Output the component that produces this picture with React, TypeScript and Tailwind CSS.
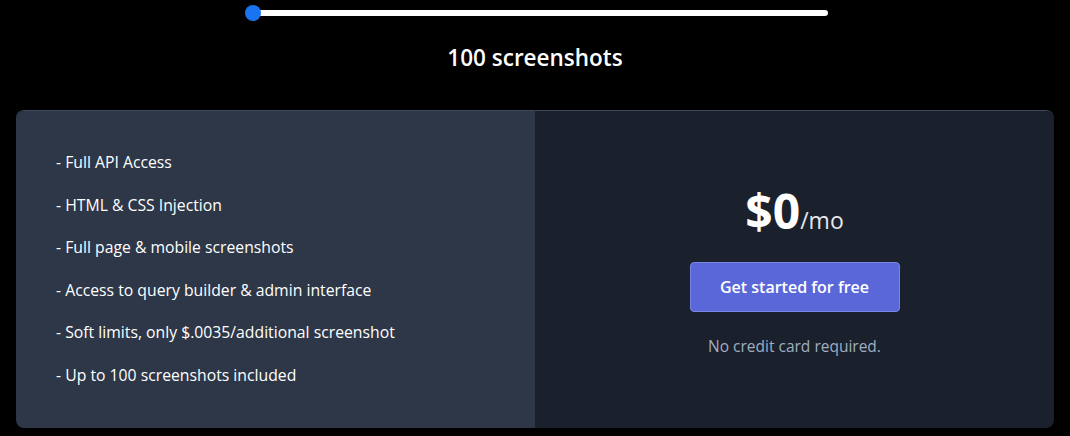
import React, { useState } from 'react';

const features = [
  'Full API Access',
  'HTML & CSS Injection',
  'Full page & mobile screenshots',
  'Access to query builder & admin interface',
  'Soft limits, only $.0035/additional screenshot',
  'Up to 100 screenshots included',
];

export default function App() {
  const [count] = useState(100);

  return (
    <div
      className="min-h-[436px] bg-black text-white pt-[7px] pb-2"
      style={{ fontFamily: '"Open Sans", "Noto Sans", sans-serif' }}
    >
      {/* Slider */}
      <div className="relative w-[582px] h-3 flex items-center ml-[246px]">
        <div className="w-full h-[6px] rounded-full bg-white" />
        <div className="absolute left-[-1px] top-1/2 -translate-y-1/2 w-4 h-4 rounded-full bg-[#1a73f0]" />
      </div>

      <h2 className="mt-[24px] text-center text-[22.5px] font-semibold leading-[30px]">
        {count} screenshots
      </h2>

      {/* Pricing card */}
      <div className="mx-4 mt-[37px] h-[318px] grid grid-cols-2 rounded-lg overflow-hidden border-t border-[#3e4859]">
        <div className="bg-[#2d3748] flex items-center pl-10">
          <ul className="flex flex-col gap-[18.6px] text-[15.75px] leading-6 -mt-[2px]">
            {features.map(f => (
              <li key={f}>- {f}</li>
            ))}
          </ul>
        </div>

        <div className="bg-[#1a202c] flex flex-col items-center justify-center pt-[6px]">
          <div className="flex items-baseline">
            <span className="text-[48px] font-bold leading-[48px]">$0</span>
            <span className="text-[23px] text-gray-200">/mo</span>
          </div>
          <button className="mt-[24px] w-[210px] h-[50px] rounded bg-[#5a67d8] border border-[#7a85e3] text-[16px] font-semibold">
            Get started for free
          </button>
          <p className="mt-[22px] text-[15.5px] leading-6 text-[#a0aec0]">No credit card required.</p>
        </div>
      </div>
    </div>
  );
}
